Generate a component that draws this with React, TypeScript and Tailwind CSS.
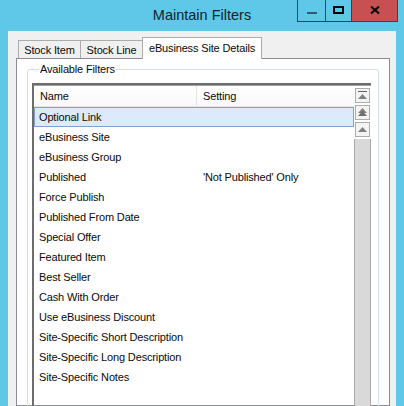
import React from "react";

const rows: [string, string][] = [
  ["Optional Link", ""],
  ["eBusiness Site", ""],
  ["eBusiness Group", ""],
  ["Published", "'Not Published' Only"],
  ["Force Publish", ""],
  ["Published From Date", ""],
  ["Special Offer", ""],
  ["Featured Item", ""],
  ["Best Seller", ""],
  ["Cash With Order", ""],
  ["Use eBusiness Discount", ""],
  ["Site-Specific Short Description", ""],
  ["Site-Specific Long Description", ""],
  ["Site-Specific Notes", ""],
];

function ScrollBtn({ kind }: { kind: "top" | "page" | "up" }) {
  return (
    <div className="w-[15px] h-[15px] border border-[#adadad] bg-[#f4f4f4] flex items-center justify-center">
      <svg width="11" height="11" viewBox="0 0 11 11">
        {kind === "top" && (
          <>
            <rect x="1" y="1" width="9" height="1" fill="#606060" />
            <polygon points="5.5,4 10,9 1,9" fill="#808080" />
          </>
        )}
        {kind === "page" && (
          <>
            <polygon points="5.5,1 10,6 1,6" fill="#808080" />
            <polygon points="5.5,4 10,9 1,9" fill="#6e6e6e" />
          </>
        )}
        {kind === "up" && <polygon points="5.5,3 10,8 1,8" fill="#808080" />}
      </svg>
    </div>
  );
}

export default function App() {
  return (
    <div className="w-[404px] h-[406px] overflow-hidden bg-[#5fc8e8] flex flex-col font-['Liberation_Sans',Arial,sans-serif] text-[11px] tracking-[-0.15px] text-[#0a0a0a]">
      {/* Title bar */}
      <div className="h-[31px] flex shrink-0">
        <div className="w-[107px]" />
        <div className="flex-1 text-center text-[14.5px] tracking-normal leading-[18px] pt-[6px] text-[#14242c]">
          Maintain Filters
        </div>
        <div className="w-[107px] flex items-start">
          <div className="w-[28px] h-[22px] border-l border-b border-[#24495a] flex items-center justify-center">
            <div className="w-[10px] h-[2px] bg-[#2c5e72] mt-[4px]" />
          </div>
          <div className="w-[26px] h-[22px] border-l border-b border-[#24495a] flex items-center justify-center">
            <div className="w-[11px] h-[8px] border-2 border-black mt-[-1px]" />
          </div>
          <div className="w-[47px] h-[22px] border-l border-r border-b border-[#24495a] bg-[#c75050] flex items-center justify-center">
            <svg width="10" height="8" viewBox="0 0 10 8" className="mt-[-1px]">
              <path d="M1 0.5 L9 7.5 M9 0.5 L1 7.5" stroke="#000" strokeWidth="2" />
            </svg>
          </div>
        </div>
      </div>

      {/* Window body */}
      <div className="flex-1 mx-[8px] bg-[#f0f0f0] pt-[6px] flex flex-col min-h-0">
        {/* Tabs */}
        <div className="ml-[10px] flex items-end h-[22px] -mb-px relative z-10">
          <div className="w-[63px] h-[18px] mb-px border border-[#acacac] border-b-0 bg-[#f0f0f0] flex items-center justify-center leading-[14px]">
            Stock Item
          </div>
          <div className="w-[61px] h-[18px] mb-px border border-[#acacac] border-l-0 border-r-0 border-b-0 bg-[#f0f0f0] flex items-center justify-center leading-[14px]">
            Stock Line
          </div>
          <div className="w-[120px] h-[22px] border border-[#acacac] border-b-0 bg-white flex justify-center pt-[3px] leading-[14px]">
            eBusiness Site Details
          </div>
        </div>

        {/* Tab panel */}
        <div className="ml-[8px] mr-[6px] flex-1 border border-[#898c95] bg-white px-[10px] pt-[4px] min-h-0">
          <fieldset className="border border-[#d5dfe5] rounded-[3px] pl-[4px] pr-[7px] pt-[7px] h-[360px]">
            <legend className="ml-[7px] px-[1px] leading-[13px]">Available Filters</legend>
            <div className="border-t-2 border-l-2 border-[#6d6d6d] flex h-[400px]">
              {/* list content */}
              <div className="flex-1 flex flex-col">
                <div className="h-[22px] flex border-b border-[#e5e5e5] bg-gradient-to-b from-white to-[#f9f9f9] border-t border-t-[#a0a0a0]">
                  <div className="w-[163px] border-r border-[#e5e5e5] pl-[6px] flex items-center">Name</div>
                  <div className="flex-1 pl-[6px] flex items-center">Setting</div>
                </div>
                {rows.map(([name, setting], i) => (
                  <div
                    key={name}
                    className={
                      i === 0
                        ? "h-[20px] flex items-center border border-[#7da2ce] bg-[#dcebfc]"
                        : "h-[20px] flex items-center border border-transparent"
                    }
                  >
                    <div className="w-[163px] pl-[4px] whitespace-nowrap">{name}</div>
                    <div className="flex-1 pl-[5px] whitespace-nowrap">{setting}</div>
                  </div>
                ))}
              </div>
              {/* scrollbar */}
              <div className="w-[17px] flex flex-col items-center pt-[2px] gap-[2px] border-t border-[#a0a0a0]">
                <ScrollBtn kind="top" />
                <ScrollBtn kind="page" />
                <ScrollBtn kind="up" />
                <div className="w-[17px] flex-1 bg-[#d9d9d9] border-l border-r border-[#a8a8a8]" />
              </div>
            </div>
          </fieldset>
        </div>
      </div>
    </div>
  );
}
